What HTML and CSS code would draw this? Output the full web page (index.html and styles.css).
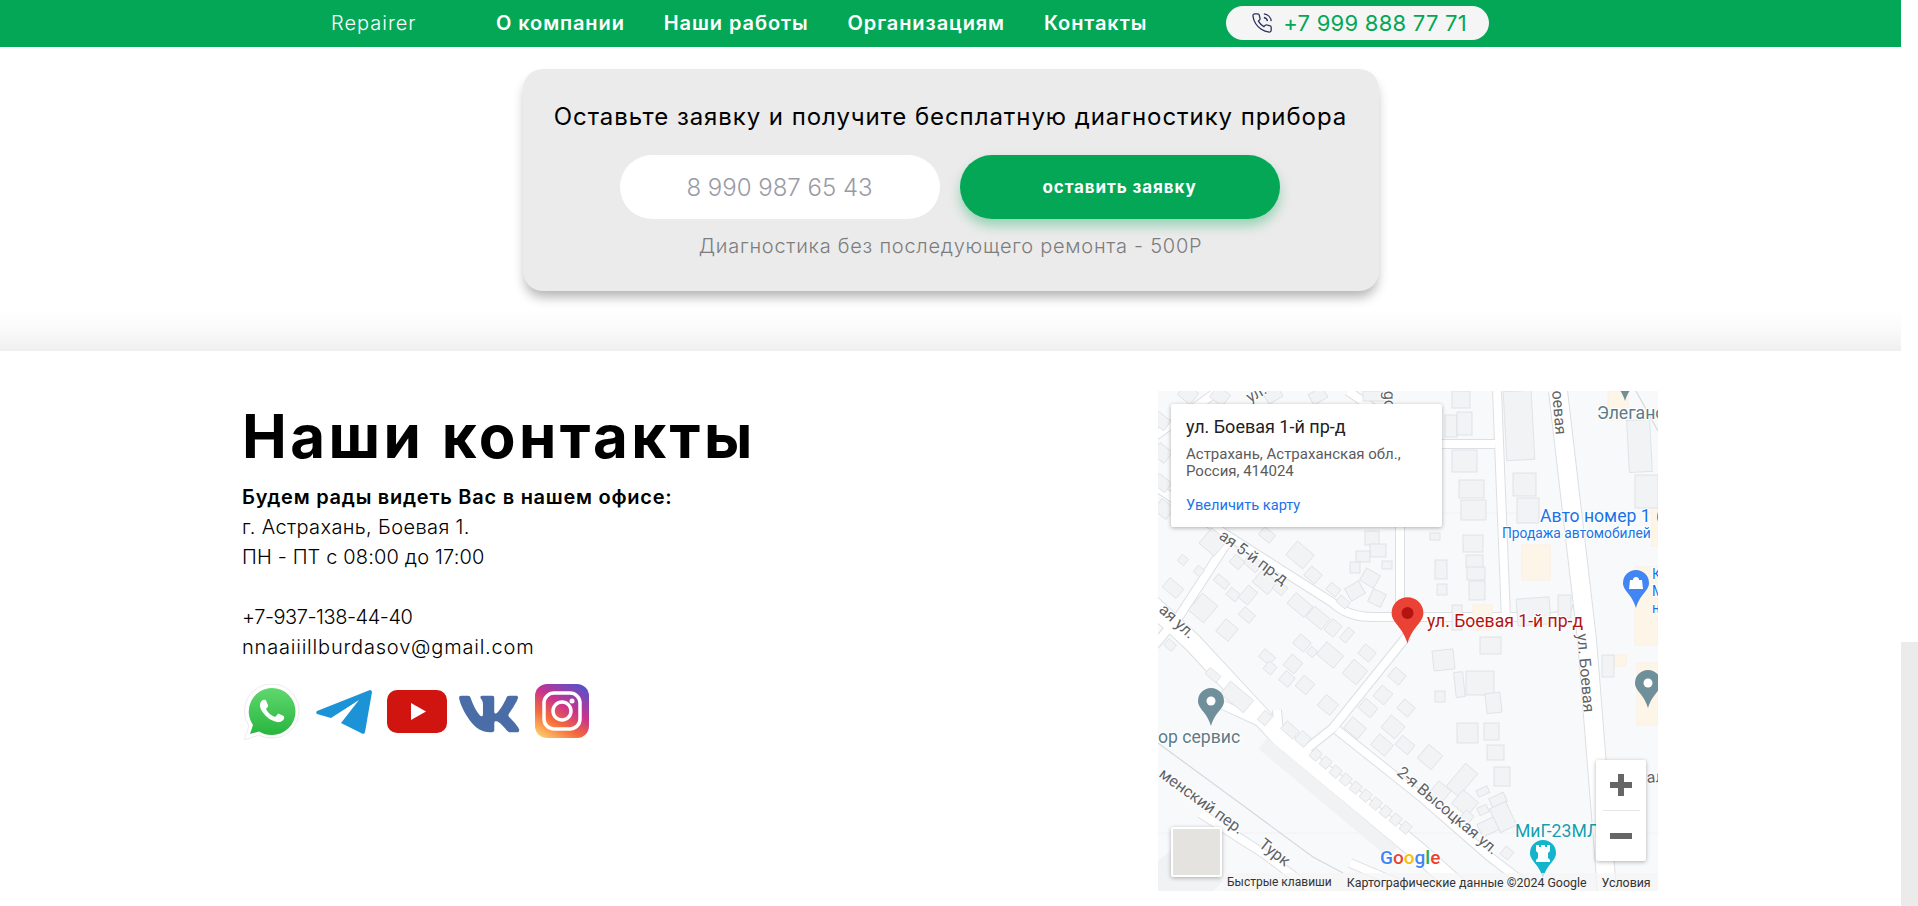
FILE: index.html
```html
<!DOCTYPE html>
<html lang="ru">
	<head>
		<meta charset="UTF-8" />
		<title>Repairer</title>
		<link rel="stylesheet" href="styles.css">
	</head>
	<body>
		<div class="page">
			<header class="head">
				<a class="logo" href="#">Repairer</a>
				<nav class="nav">
					<a href="#">О компании</a>
					<a href="#">Наши работы</a>
					<a href="#">Организациям</a>
					<a href="#">Контакты</a>
				</nav>
				<a class="phone" href="#">
					<svg viewBox="0 0 24 24" width="22" height="22">
						<path d="M14.05 2a9 9 0 0 1 8 7.94M14.05 6A5 5 0 0 1 18 10M22 16.92v3a2 2 0 0 1-2.18 2 19.79 19.79 0 0 1-8.63-3.07 19.5 19.5 0 0 1-6-6 19.79 19.79 0 0 1-3.07-8.67A2 2 0 0 1 4.11 2h3a2 2 0 0 1 2 1.72 12.84 12.84 0 0 0 .7 2.81 2 2 0 0 1-.45 2.11L8.09 9.91a16 16 0 0 0 6 6l1.27-1.27a2 2 0 0 1 2.11-.45 12.84 12.84 0 0 0 2.81.7A2 2 0 0 1 22 16.92z"/>
					</svg>
					<span>+7 999 888 77 71</span>
				</a>
			</header>

			<section class="promo">
				<div class="promo-card">
					<h2>Оставьте заявку и получите бесплатную диагностику прибора</h2>
					<form class="promo-form">
						<input type="text" placeholder="8 990 987 65 43" />
						<button type="button">оставить заявку</button>
					</form>
					<p>Диагностика без последующего ремонта - 500Р</p>
				</div>
			</section>

			<section class="contacts">
				<div class="contacts-info">
					<h1>Наши контакты</h1>
					<p class="contacts-text">
						<b>Будем рады видеть Вас в нашем офисе:</b><br />
						<span class="line-addr">г. Астрахань, Боевая 1.</span><br />
						<span class="line-hours">ПН - ПТ с 08:00 до 17:00</span><br />
						<br />
						<span class="line-phone">+7-937-138-44-40</span><br />
						<span class="line-mail">nnaaiiillburdasov@gmail.com</span>
					</p>
					<div class="socials">
						<svg class="soc-wa" viewBox="0 0 58 56">
							<defs>
								<linearGradient id="wa" x1="0" y1="0" x2="0" y2="1">
									<stop offset="0" stop-color="#5fd86e" />
									<stop offset="1" stop-color="#28b53f" />
								</linearGradient>
							</defs>
							<path d="M29 0a27 27 0 0 1 0 54c-5 0-9-1-13-3L1 56l5-14A27 27 0 0 1 29 0z" fill="#fff" stroke="#ececec" />
							<path d="M29 4a23.500 23.500 0 0 1 0 47c-5 0-9-1-13-3.500L7 50l3-9A23.500 23.500 0 0 1 29 4z" fill="url(#wa)" />
							<path transform="translate(5 3) scale(2)" fill="#fff" d="M17.472 14.382c-.297-.149-1.758-.867-2.03-.967-.273-.099-.471-.148-.67.15-.197.297-.767.966-.94 1.164-.173.199-.347.223-.644.075-.297-.15-1.255-.463-2.39-1.475-.883-.788-1.48-1.761-1.653-2.059-.173-.297-.018-.458.13-.606.134-.133.298-.347.446-.52.149-.174.198-.298.298-.497.099-.198.05-.371-.025-.52-.075-.149-.669-1.612-.916-2.207-.242-.579-.487-.5-.669-.51-.173-.008-.371-.01-.57-.01-.198 0-.52.074-.792.372-.272.297-1.04 1.016-1.04 2.479 0 1.462 1.065 2.875 1.213 3.074.149.198 2.096 3.2 5.077 4.487.709.306 1.262.489 1.694.625.712.227 1.36.195 1.871.118.571-.085 1.758-.719 2.006-1.413.248-.694.248-1.289.173-1.413-.074-.124-.272-.198-.57-.347z" />
						</svg>
						<svg class="soc-tg" viewBox="0 0 56 44">
							<path fill="#1c93d6" d="M1 21 54 0c1 0 2 1 2 2l-7 40c-.500 2-2 2-3 1.500L25 33 43 10 15 28 1 24c-1-1-1-2 0-3z" />
						</svg>
						<svg class="soc-yt" viewBox="0 0 60 43">
							<rect width="60" height="43" rx="10" fill="#d01410" />
							<path d="M24 13 39 21.500 24 30z" fill="#fff" />
						</svg>
						<svg class="soc-vk" viewBox="4 7.400 16.200 9.900" preserveAspectRatio="none">
							<path fill="#4a6da7" d="M19.376 17.123h-1.744c-.66 0-.864-.525-2.05-1.727-1.033-1-1.49-1.135-1.744-1.135-.356 0-.458.102-.458.593v1.575c0 .424-.135.678-1.253.678-1.846 0-3.896-1.118-5.335-3.202C4.624 10.857 4.03 8.57 4.03 8.096c0-.254.102-.491.593-.491h1.744c.44 0 .61.203.78.677.863 2.49 2.303 4.675 2.896 4.675.22 0 .322-.102.322-.66V9.721c-.068-1.186-.695-1.287-.695-1.71 0-.204.17-.407.44-.407h2.744c.373 0 .508.203.508.643v3.473c0 .372.17.508.271.508.22 0 .407-.136.813-.542 1.254-1.406 2.151-3.574 2.151-3.574.119-.254.322-.491.763-.491h1.744c.525 0 .644.27.525.643-.22 1.017-2.354 4.031-2.354 4.031-.186.305-.254.44 0 .78.186.254.796.779 1.203 1.253.745.847 1.32 1.558 1.473 2.05.17.49-.085.744-.576.744z" />
						</svg>
						<svg class="soc-ig" viewBox="0 0 54 54">
							<defs>
								<linearGradient id="ig" x1="0.200" y1="1" x2="0.800" y2="0">
									<stop offset="0" stop-color="#fdc468" />
									<stop offset="0.300" stop-color="#f56a3a" />
									<stop offset="0.600" stop-color="#c8328f" />
									<stop offset="1" stop-color="#5b50c8" />
								</linearGradient>
							</defs>
							<rect width="54" height="54" rx="12" fill="url(#ig)" />
							<rect x="9" y="9" width="36" height="36" rx="10" fill="none" stroke="#fff" stroke-width="3.500" />
							<circle cx="27" cy="27" r="9" fill="none" stroke="#fff" stroke-width="3.500" />
							<circle cx="37" cy="17" r="2.500" fill="#fff" />
						</svg>
					</div>
				</div>

				<div class="map">
					<svg class="map-canvas" viewBox="0 0 500 500" width="500" height="500">
						<defs>
							<path id="pin" d="M0-13a13 13 0 0 1 13 13c0 8-9 11-13 25c-4-14-13-17-13-25a13 13 0 0 1 13-13z" />
							<g id="wide">
								<path d="M400 0 429 249 449 500" />
								<path d="M-10 210 35 252 122 346 262 462 310 505" />
							</g>
							<g id="narrow">
								<path d="M-10 90 64 141 175 212Q190 226 215 226H395Q408 226 411 210" />
								<path d="M72 147 22 224-10 262" />
								<path d="M339 0 348 228" />
								<path d="M242 130V221" />
								<path d="M249 245 175 337 145 361" />
								<path d="M179 339 262 405 332 466 370 495" />
								<path d="M65 314 119 339M119 319 121 342" />
								<path d="M42 422 105 462 155 500" />
								<path d="M192 472 270 505" />
								<path d="M262 53H337" />
								<path d="M60 0 -10 50" />
								<path d="M190 0 262 50" />
							</g>
						</defs>

						<line class="seam" x1="0" y1="122" x2="500" y2="122" />
						<line class="seam" x1="0" y1="442" x2="500" y2="442" />

						<g class="road-edge wide"><use href="#wide" /></g>
						<g class="road-edge narrow"><use href="#narrow" /></g>
						<g class="road-fill wide"><use href="#wide" /></g>
						<g class="road-fill narrow"><use href="#narrow" /></g>
						<path class="rail" d="M0 352 155 466 185 482" />
						<path class="rail" d="M478 0 500 40" />

						<g class="beige">
							<rect x="450" y="0" width="20" height="29" />
							<rect x="364" y="154" width="28" height="35" />
							<rect x="315" y="214" width="19" height="25" />
							<rect x="477" y="176" width="23" height="78" />
							<rect x="494" y="115" width="6" height="40" />
							<rect x="479" y="272" width="21" height="62" />
							<rect x="456" y="264" width="12" height="11" />
						</g>

						<g class="bld">
							<rect x="347" y="0" width="28" height="69" transform="rotate(-3 361 35)" />
							<rect x="355" y="82" width="23" height="23" />
							<rect x="359" y="107" width="22" height="25" />
							<rect x="359" y="207" width="33" height="27" transform="rotate(-4 375 220)" />
							<rect x="400" y="204" width="13" height="23" />
							<rect x="287" y="24" width="12" height="22" />
							<rect x="299" y="21" width="15" height="23" />
							<rect x="294" y="0" width="18" height="17" />
							<rect x="294" y="59" width="25" height="22" />
							<rect x="301" y="89" width="25" height="18" />
							<rect x="303" y="109" width="25" height="20" />
							<rect x="272" y="142" width="10" height="7" />
							<rect x="305" y="144" width="20" height="17" />
							<rect x="308" y="164" width="17" height="13" />
							<rect x="309" y="176" width="18" height="13" />
							<rect x="311" y="190" width="16" height="19" />
							<rect x="277" y="169" width="12" height="19" />
							<rect x="279" y="193" width="10" height="11" />
							<rect x="294" y="214" width="10" height="25" />
							<rect x="470" y="29" width="23" height="52" transform="rotate(-3 481 55)" />
							<rect x="477" y="84" width="23" height="33" />
							<rect x="322" y="246" width="21" height="17" />
							<rect x="275" y="259" width="21" height="20" transform="rotate(-6 285 269)" />
							<rect x="297" y="281" width="9" height="25" transform="rotate(-6 302 294)" />
							<rect x="308" y="280" width="28" height="24" />
							<rect x="328" y="302" width="15" height="20" transform="rotate(-6 335 312)" />
							<rect x="277" y="300" width="10" height="11" />
							<rect x="299" y="332" width="21" height="20" />
							<rect x="326" y="332" width="15" height="17" />
							<rect x="329" y="354" width="17" height="15" />
							<rect x="336" y="376" width="16" height="19" />
							<rect x="444" y="264" width="12" height="22" />
							<g transform="rotate(40 272 366)"><rect x="263" y="357" width="18" height="18" /></g>
							<g transform="rotate(40 304 389)"><rect x="296" y="374" width="16" height="30" /></g>
							<g transform="rotate(40 307 412)"><rect x="297" y="403" width="20" height="18" /></g>
							<g transform="rotate(-25 325 401)"><rect x="319" y="397" width="12" height="7" /></g>
							<g transform="rotate(-25 325 419)"><rect x="320" y="415" width="10" height="8" /></g>
							<g transform="rotate(-25 340 409)"><rect x="332" y="404" width="16" height="10" /></g>
							<g transform="rotate(-25 345 426)"><rect x="336" y="413" width="18" height="26" /></g>
							<g transform="rotate(-25 330 436)"><rect x="321" y="429" width="18" height="14" /></g>
							<g transform="rotate(40 349 462)"><rect x="344" y="457" width="10" height="10" /></g>
							<g transform="rotate(40 309 426)"><rect x="304" y="421" width="10" height="10" /></g>
							<g transform="rotate(40 282 401)"><rect x="274" y="393" width="16" height="16" /></g>
						</g>

						<g class="bld">
							<g transform="rotate(38 30 3)"><rect x="22" y="-4" width="16" height="14" /></g>
							<g transform="rotate(38 62 5)"><rect x="54" y="-2" width="16" height="14" /></g>
							<g transform="rotate(-30 115 4)"><rect x="107" y="-2" width="16" height="12" /></g>
							<g transform="rotate(-30 160 5)"><rect x="152" y="-1" width="16" height="12" /></g>
							<rect x="205" y="0" width="26" height="10" />
							<g transform="rotate(38 3 30)"><rect x="-5" y="24" width="16" height="12" /></g>
							<g transform="rotate(38 4 62)"><rect x="-4" y="55" width="16" height="14" /></g>
							<g transform="rotate(38 4 92)"><rect x="-4" y="86" width="16" height="12" /></g>
							<g transform="rotate(38 6 118)"><rect x="-2" y="111" width="16" height="14" /></g>
						</g>

						<g class="bld">
							<g transform="rotate(40 55 151)"><rect x="45" y="141" width="20" height="20" /></g>
							<g transform="rotate(40 25 169)"><rect x="21" y="165" width="8" height="8" /></g>
							<g transform="rotate(40 41 180)"><rect x="37" y="176" width="8" height="8" /></g>
							<g transform="rotate(40 15 197)"><rect x="6" y="191" width="18" height="12" /></g>
							<g transform="rotate(40 45 217)"><rect x="35" y="206" width="20" height="22" /></g>
							<g transform="rotate(40 64 191)"><rect x="56" y="187" width="15" height="8" /></g>
							<g transform="rotate(40 75 204)"><rect x="69" y="199" width="12" height="9" /></g>
							<g transform="rotate(40 90 204)"><rect x="84" y="196" width="12" height="16" /></g>
							<g transform="rotate(40 107 191)"><rect x="97" y="183" width="20" height="16" /></g>
							<g transform="rotate(40 122 197)"><rect x="116" y="192" width="12" height="10" /></g>
							<g transform="rotate(40 95 172)"><rect x="87" y="166" width="16" height="12" /></g>
							<g transform="rotate(40 79 171)"><rect x="73" y="166" width="12" height="10" /></g>
							<g transform="rotate(40 109 144)"><rect x="102" y="139" width="14" height="10" /></g>
							<g transform="rotate(40 142 164)"><rect x="131" y="155" width="22" height="18" /></g>
							<g transform="rotate(40 155 184)"><rect x="148" y="178" width="14" height="12" /></g>
							<g transform="rotate(40 175 199)"><rect x="169" y="194" width="12" height="9" /></g>
							<g transform="rotate(40 185 211)"><rect x="179" y="207" width="12" height="8" /></g>
							<g transform="rotate(40 142 214)"><rect x="131" y="207" width="22" height="14" /></g>
							<g transform="rotate(40 160 227)"><rect x="150" y="220" width="20" height="14" /></g>
							<g transform="rotate(40 175 237)"><rect x="169" y="230" width="12" height="14" /></g>
							<g transform="rotate(40 189 244)"><rect x="185" y="237" width="8" height="14" /></g>
							<g transform="rotate(40 89 224)"><rect x="82" y="219" width="14" height="10" /></g>
							<g transform="rotate(40 69 239)"><rect x="61" y="231" width="16" height="16" /></g>
							<g transform="rotate(40 12 254)"><rect x="7" y="250" width="10" height="8" /></g>
							<g transform="rotate(30 212 187)"><rect x="204" y="180" width="16" height="14" /></g>
							<g transform="rotate(25 219 207)"><rect x="212" y="200" width="14" height="14" /></g>
							<rect x="207" y="140" width="14" height="14" />
							<rect x="212" y="153" width="16" height="13" />
							<rect x="198" y="160" width="14" height="11" />
							<rect x="192" y="171" width="10" height="11" />
							<rect x="224" y="170" width="10" height="8" />
							<g transform="rotate(-30 197 200)"><rect x="189" y="193" width="16" height="14" /></g>
							<g transform="rotate(40 79 306)"><rect x="64" y="298" width="30" height="16" /></g>
							<g transform="rotate(40 107 327)"><rect x="102" y="321" width="10" height="12" /></g>
							<g transform="rotate(40 55 284)"><rect x="48" y="280" width="14" height="8" /></g>
							<g transform="rotate(40 109 266)"><rect x="102" y="261" width="14" height="10" /></g>
							<g transform="rotate(40 112 277)"><rect x="107" y="272" width="10" height="10" /></g>
							<g transform="rotate(40 135 273)"><rect x="128" y="266" width="14" height="14" /></g>
							<g transform="rotate(40 129 288)"><rect x="123" y="282" width="12" height="12" /></g>
							<g transform="rotate(40 147 294)"><rect x="140" y="287" width="14" height="14" /></g>
							<g transform="rotate(40 170 314)"><rect x="162" y="307" width="16" height="14" /></g>
							<g transform="rotate(40 172 264)"><rect x="161" y="256" width="22" height="16" /></g>
							<g transform="rotate(40 154 261)"><rect x="150" y="257" width="8" height="8" /></g>
							<g transform="rotate(40 144 252)"><rect x="137" y="246" width="14" height="12" /></g>
							<g transform="rotate(40 197 281)"><rect x="188" y="272" width="18" height="18" /></g>
							<g transform="rotate(40 209 262)"><rect x="202" y="256" width="14" height="12" /></g>
							<g transform="rotate(40 239 285)"><rect x="232" y="279" width="14" height="12" /></g>
							<g transform="rotate(40 225 304)"><rect x="218" y="297" width="14" height="14" /></g>
							<g transform="rotate(40 248 317)"><rect x="241" y="311" width="14" height="12" /></g>
							<g transform="rotate(40 210 317)"><rect x="202" y="311" width="16" height="12" /></g>
							<g transform="rotate(40 197 337)"><rect x="188" y="330" width="18" height="14" /></g>
							<g transform="rotate(40 224 354)"><rect x="215" y="347" width="18" height="14" /></g>
							<g transform="rotate(40 235 336)"><rect x="226" y="328" width="18" height="16" /></g>
							<g transform="rotate(40 247 354)"><rect x="239" y="348" width="16" height="12" /></g>
							<g transform="rotate(42 132 339)"><rect x="124" y="334" width="16" height="10" /></g>
							<g transform="rotate(42 145 348)"><rect x="139" y="342" width="12" height="12" /></g>
							<g transform="rotate(40 158 364)"><rect x="153" y="359" width="9" height="10" /></g>
							<g transform="rotate(40 168 372)"><rect x="163" y="367" width="9" height="10" /></g>
							<g transform="rotate(40 178 381)"><rect x="173" y="376" width="9" height="10" /></g>
							<g transform="rotate(40 188 389)"><rect x="183" y="384" width="9" height="10" /></g>
							<g transform="rotate(40 198 397)"><rect x="193" y="392" width="9" height="10" /></g>
							<g transform="rotate(40 208 405)"><rect x="203" y="400" width="9" height="10" /></g>
							<g transform="rotate(40 218 413)"><rect x="213" y="408" width="9" height="10" /></g>
							<g transform="rotate(40 228 421)"><rect x="223" y="416" width="9" height="10" /></g>
							<g transform="rotate(40 238 429)"><rect x="233" y="424" width="9" height="10" /></g>
							<g transform="rotate(40 248 437)"><rect x="243" y="432" width="9" height="10" /></g>
						</g>
						<g transform="rotate(40 170 407)"><rect class="lot" x="85" y="400" width="170" height="14" /></g>
						<path class="lot" d="M0 470 25 450 65 490 55 500H0z" />

						<g class="lbl road">
							<text transform="translate(394 0) rotate(85)">оевая</text>
							<text transform="translate(419 243) rotate(85)">ул. Боевая</text>
							<text transform="translate(60 147) rotate(36)">ая 5-й пр-д</text>
							<text transform="translate(0 220) rotate(42)">ая ул.</text>
							<text transform="translate(238 383) rotate(40)">2-я Высоцкая ул.</text>
							<text transform="translate(0 385) rotate(36)">менский пер.</text>
							<text transform="translate(100 455) rotate(38)">Турк</text>
							<text transform="translate(489 392) rotate(-5)">ал</text>
							<text transform="translate(92 12) rotate(-30)">ул. Б</text>
							<text transform="translate(226 0) rotate(88)">go</text>
						</g>

						<text class="lbl poi-blue" x="382" y="131">Авто номер 1</text>
						<text class="lbl poi-blue-sm" x="344" y="147">Продажа автомобилей</text>
						<text class="lbl poi-grey" x="439" y="28">Элеганс</text>
						<text class="lbl poi-grey" x="0" y="352">ор сервис</text>
						<text class="lbl poi-teal" x="357" y="446">МиГ-23МЛ</text>
						<text class="lbl poi-red" x="269" y="236">ул. Боевая 1-й пр-д</text>
						<text class="lbl poi-blue-sm" x="494" y="188">К</text>
						<text class="lbl poi-blue-sm" x="494" y="205">М</text>
						<text class="lbl poi-blue-sm" x="494" y="222">н</text>

						<use href="#pin" x="467" y="-15" class="pin-grey" />
						<use href="#pin" x="512" y="126" class="pin-blue" />
						<use href="#pin" x="478" y="192" class="pin-blue" />
						<path d="M472 189h12l1 9h-14zM475 189a3 3 0 0 1 6 0" class="shop" />
						<use href="#pin" x="490" y="292" class="pin-grey" />
						<circle cx="490" cy="292" r="4.500" fill="#fff" />
						<use href="#pin" x="53" y="310" class="pin-grey" />
						<circle cx="53" cy="310" r="4.500" fill="#fff" />
						<use href="#pin" x="385" y="462" class="pin-teal" />
						<path fill="#fff" d="M378 454h3v2h2v-2h4v2h2v-2h3v6l-2 2v5l2 2v2h-14v-2l2-2v-5l-2-2z" />
						<use href="#pin" transform="translate(249.500 222) scale(1.220)" class="pin-red" />
						<circle cx="249.500" cy="222" r="6" fill="#b31412" />

						<text class="google" x="222" y="473"><tspan fill="#4285f4">G</tspan><tspan fill="#ea4335">o</tspan><tspan fill="#fbbc05">o</tspan><tspan fill="#4285f4">g</tspan><tspan fill="#34a853">l</tspan><tspan fill="#ea4335">e</tspan></text>
					</svg>

					<div class="map-card">
						<div class="map-card-title">ул. Боевая 1-й пр-д</div>
						<div class="map-card-addr">Астрахань, Астраханская обл.,<br />Россия, 414024</div>
						<a class="map-card-link" href="#">Увеличить карту</a>
					</div>

					<div class="map-zoom">
						<button type="button" aria-label="+"><span class="zoom-plus"></span></button>
						<i></i>
						<button type="button" aria-label="-"><span class="zoom-minus"></span></button>
					</div>

					<div class="map-thumb"></div>

					<div class="map-attr">
						<span class="attr-keys">Быстрые клавиши</span>
						<span class="attr-data">Картографические данные ©2024 Google</span>
						<span class="attr-terms">Условия</span>
					</div>
				</div>
			</section>
		</div>
		<div class="scrollbar"><div class="scrollbar-track"></div></div>
	</body>
</html>
```

FILE: styles.css
```css
body {
	margin: 0;
	height: 906px;
	overflow: hidden;
	display: flex;
	background: #fff;
	color: #000;
	font-family: "Inter", "Noto Sans", sans-serif;
}

a {
	color: inherit;
	text-decoration: none;
}

.page {
	flex: 1;
	min-width: 0;
}

.scrollbar {
	width: 17px;
	padding-top: 642px;
	display: flex;
}

.scrollbar-track {
	flex: 1;
	background: #ebebeb;
}

/* Header */
.head {
	height: 47px;
	box-sizing: border-box;
	padding: 0 0 1px 331px;
	background: #03a756;
	color: #fff;
	display: flex;
	align-items: center;
}

.logo {
	width: 165px;
	font-size: 20px;
	font-weight: 300;
	letter-spacing: 1px;
}

.nav {
	display: flex;
	gap: 39px;
	font-size: 20px;
	font-weight: 600;
	letter-spacing: 0.9px;
}

.phone {
	margin-left: 79px;
	width: 263px;
	height: 34px;
	border-radius: 17px;
	background: #f5f5f5;
	color: #03a756;
	display: flex;
	align-items: center;
	padding-left: 25px;
	gap: 10px;
	box-sizing: border-box;
	font-size: 22px;
	letter-spacing: 0.25px;
}

.phone svg {
	fill: none;
	stroke: #2b2f5e;
	stroke-width: 1.400;
}

/* Request card */
.promo {
	height: 304px;
	box-sizing: border-box;
	padding-top: 22px;
	background: linear-gradient(to bottom, #fff 263px, #fafafa 283px, #efefef 100%);
}

.promo-card {
	width: 856px;
	height: 222px;
	margin: 0 auto;
	background: #ebebeb;
	border-radius: 20px;
	box-shadow: 0 8px 12px -2px rgba(0, 0, 0, 0.3);
	display: flex;
	flex-direction: column;
	align-items: center;
}

.promo-card h2 {
	margin: 32px 0 0;
	font-size: 24px;
	line-height: 32px;
	font-weight: 400;
	letter-spacing: 0.93px;
}

.promo-form {
	display: flex;
	gap: 20px;
	margin: 22px 2px 0 0;
}

.promo-form input {
	width: 320px;
	height: 64px;
	box-sizing: border-box;
	border: none;
	border-radius: 32px;
	background: #fff;
	font-family: inherit;
	font-size: 24px;
	font-weight: 300;
	text-align: center;
	outline: none;
}

.promo-form input::placeholder {
	color: #9a9aa5;
	opacity: 1;
}

.promo-form button {
	width: 320px;
	height: 64px;
	border: none;
	border-radius: 32px;
	background: #03a756;
	color: #fff;
	font-family: inherit;
	font-size: 17px;
	font-weight: 700;
	letter-spacing: 0.9px;
	box-shadow: 0 7px 12px rgba(3, 167, 86, 0.35);
	cursor: pointer;
}

.promo-card p {
	margin: 13px 0 0;
	font-size: 20px;
	line-height: 28px;
	font-weight: 300;
	letter-spacing: 0.74px;
	color: #7d7d7d;
}

/* Contacts */
.contacts {
	display: flex;
	justify-content: space-between;
	padding: 40px 243px 0 242px;
}

.contacts-info {
	padding-top: 10px;
}

.contacts-info h1 {
	margin: 0;
	font-size: 60px;
	line-height: 70px;
	font-weight: 700;
	letter-spacing: 3.4px;
}

.contacts-text {
	margin: 11px 0 0;
	font-size: 20px;
	line-height: 30px;
	font-weight: 300;
}

.contacts-text b {
	font-weight: 600;
	letter-spacing: 0.74px;
}

.line-addr {
	letter-spacing: 0.37px;
}

.line-hours {
	letter-spacing: 0.15px;
}

.line-phone {
	letter-spacing: -0.45px;
}

.line-mail {
	letter-spacing: 0.8px;
}

.socials {
	display: flex;
	align-items: flex-start;
	margin-top: 22px;
}

.soc-wa {
	width: 58px;
	height: 56px;
	margin-left: 1px;
}

.soc-tg {
	width: 56px;
	height: 44px;
	margin: 6px 0 0 15px;
}

.soc-yt {
	width: 60px;
	height: 43px;
	margin: 6px 0 0 15px;
}

.soc-vk {
	width: 61px;
	height: 38px;
	margin: 11px 0 0 12px;
}

.soc-ig {
	width: 54px;
	height: 54px;
	margin-left: 15px;
}

/* Map */
.map {
	position: relative;
	width: 500px;
	height: 500px;
	overflow: hidden;
	background: #f8f9fa;
	font-family: "Roboto", sans-serif;
}

.map-canvas {
	display: block;
}

.seam {
	stroke: #f1f2f4;
	stroke-width: 1;
}

.road-edge,
.road-fill {
	fill: none;
}

.road-edge {
	stroke: #dcdfe3;
}

.road-fill {
	stroke: #fff;
}

.road-edge.wide {
	stroke-width: 20;
}

.road-fill.wide {
	stroke-width: 18;
}

.road-edge.narrow {
	stroke-width: 10;
}

.road-fill.narrow {
	stroke-width: 8;
}

.rail {
	fill: none;
	stroke: #d5d8dc;
	stroke-width: 1.200;
}

.beige rect {
	fill: #fef5e9;
	stroke: #fcefdd;
}

.bld rect {
	fill: #f1f3f4;
	stroke: #dfe1e5;
	stroke-width: 0.900;
}

.lot {
	fill: #f1f2f3;
}

.lbl {
	font-family: "Roboto", sans-serif;
	font-size: 17.600px;
	paint-order: stroke;
	stroke: #fff;
	stroke-width: 2px;
}

.lbl.road {
	font-size: 16px;
	fill: #5f6368;
}

.poi-blue {
	fill: #1a73e8;
}

.lbl.poi-blue-sm {
	fill: #1a73e8;
	font-size: 13.800px;
}

.poi-grey {
	fill: #5b7b88;
}

.poi-teal {
	fill: #129eaf;
}

.poi-red {
	fill: #b31412;
}

.pin-grey {
	fill: #6f8f9a;
}

.pin-blue {
	fill: #4285f4;
}

.pin-teal {
	fill: #12b5cb;
}

.pin-red {
	fill: #ea4335;
}

.shop {
	fill: #fff;
}

.google {
	font-family: "Roboto", sans-serif;
	font-size: 19px;
	font-weight: 500;
	paint-order: stroke;
	stroke: #fff;
	stroke-width: 2px;
}

.map-card {
	position: absolute;
	left: 13px;
	top: 13px;
	width: 271px;
	height: 123px;
	box-sizing: border-box;
	padding: 13px 15px;
	background: #fff;
	border-radius: 2px;
	box-shadow: 0 1px 4px rgba(0, 0, 0, 0.3);
}

.map-card-title {
	font-size: 18px;
	line-height: 20px;
	color: #202124;
}

.map-card-addr {
	margin-top: 9px;
	font-size: 15px;
	line-height: 17px;
	color: #5b5b5b;
}

.map-card-link {
	display: block;
	margin-top: 17px;
	font-size: 14.600px;
	line-height: 17px;
	color: #1a73e8;
}

.map-zoom {
	position: absolute;
	left: 438px;
	top: 369px;
	width: 50px;
	height: 101px;
	background: #fff;
	border-radius: 2px;
	box-shadow: 0 1px 4px rgba(0, 0, 0, 0.3);
	display: flex;
	flex-direction: column;
	align-items: center;
}

.map-zoom button {
	flex: 1;
	width: 100%;
	padding: 0;
	border: none;
	background: none;
	display: flex;
	align-items: center;
	justify-content: center;
}

.map-zoom i {
	width: 37px;
	height: 1px;
	background: #e6e6e6;
}

.zoom-plus,
.zoom-minus {
	display: block;
	width: 22px;
	height: 6px;
	background: #666;
	position: relative;
}

.zoom-plus::after {
	content: "";
	position: absolute;
	left: 8px;
	top: -8px;
	width: 6px;
	height: 22px;
	background: #666;
}

.map-thumb {
	position: absolute;
	left: 13px;
	top: 436px;
	width: 51px;
	height: 50px;
	box-sizing: border-box;
	background: #e5e3df;
	border: 2px solid #fff;
	border-radius: 2px;
	box-shadow: 0 1px 4px rgba(0, 0, 0, 0.3);
}

.map-attr {
	position: absolute;
	right: 0;
	bottom: 0;
	left: 66px;
	height: 18px;
	display: flex;
	align-items: center;
	background: rgba(245, 245, 245, 0.7);
	font-size: 12px;
	color: #333;
	white-space: nowrap;
}

.attr-keys {
	margin-left: 3px;
}

.attr-data {
	margin-left: 15px;
	font-size: 12.400px;
}

.attr-terms {
	margin-left: 15px;
	font-size: 12.400px;
}
```
